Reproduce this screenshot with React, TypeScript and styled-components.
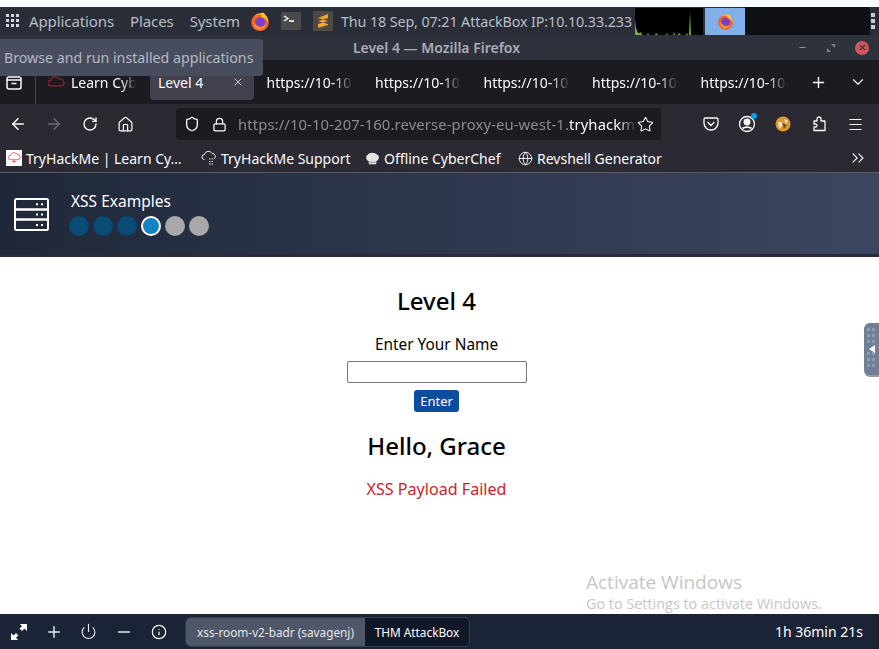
import { FC, ReactNode } from 'react';
import styled, { createGlobalStyle } from 'styled-components';
import {
  ArrowLeft,
  ArrowRight,
  ChevronDown,
  ChevronsRight,
  Globe,
  Home,
  Info,
  Lock,
  Menu,
  Minus,
  Plus,
  Power,
  RotateCw,
  Shield,
  Star,
  X,
} from 'lucide-react';

const GlobalStyle = createGlobalStyle`
  html, body { margin: 0; padding: 0; background: #fff; }
  body { font-family: "Noto Sans", "Open Sans", sans-serif; overflow: hidden; }
  #root { width: 879px; height: 649px; }
`;

const Screen = styled.div`
  position: relative;
  width: 879px;
  height: 649px;
  display: flex;
  flex-direction: column;
  overflow: hidden;
  background: #fff;
`;

const TopStrip = styled.div`
  height: 7px;
  flex: none;
  background: #f8fbfd;
`;

const Panel = styled.div`
  height: 28px;
  flex: none;
  display: flex;
  align-items: center;
  background: #292d38;
  color: #b9bdc6;
  font-size: 15px;
  letter-spacing: -0.1px;
`;

const AppGrid = styled.svg`
  width: 14px;
  height: 14px;
  margin-left: 6px;
  margin-right: 9px;
  flex: none;
`;

const PanelLabel = styled.span<{ $gap: number }>`
  margin-right: ${(p) => p.$gap}px;
  white-space: nowrap;
`;

const Clock = styled.span`
  width: 292px;
  flex: none;
  font-size: 14.3px;
  white-space: nowrap;
`;

const Launcher = styled.div<{ $gap: number }>`
  width: 20px;
  height: 20px;
  flex: none;
  margin-right: ${(p) => p.$gap}px;
  display: flex;
  align-items: center;
  justify-content: center;
`;

const Graph = styled.svg`
  width: 68px;
  height: 27px;
  flex: none;
  margin-left: 2px;
  background: #000;
`;

const TaskButton = styled.div`
  width: 40px;
  height: 27px;
  flex: none;
  margin-left: 2px;
  display: flex;
  align-items: center;
  justify-content: center;
  background: #7fb0ea;
`;

const TaskEmpty = styled.div`
  width: 125px;
  height: 28px;
  flex: none;
  background: #0f1016;
`;

const PanelDots = styled.div`
  margin-left: 1px;
  display: flex;
  flex-direction: column;
  gap: 2px;
`;

const PanelDot = styled.i`
  width: 4px;
  height: 4px;
  background: #c8ccd4;
`;

const TitleBar = styled.div`
  position: relative;
  height: 25px;
  flex: none;
  padding-right: 6px;
  display: flex;
  align-items: center;
  justify-content: center;
  background: #2e323d;
  color: #a9adb6;
  font-size: 14px;
  font-weight: 600;
`;

const WindowButtons = styled.div`
  position: absolute;
  top: 0;
  right: 10px;
  height: 25px;
  display: flex;
  align-items: center;
  gap: 19px;
`;

const CloseDot = styled.div`
  width: 14px;
  height: 14px;
  border-radius: 50%;
  background: #d0555f;
  display: flex;
  align-items: center;
  justify-content: center;
`;

const TabBar = styled.div`
  height: 44px;
  flex: none;
  display: flex;
  align-items: flex-start;
  background: #1c1b22;
  color: #fbfbfe;
  font-size: 14px;
`;

const ListButton = styled.div`
  width: 36px;
  height: 44px;
  flex: none;
  padding: 2px 8px 0 0;
  display: flex;
  align-items: center;
  justify-content: center;
  border-right: 1px solid #45454d;
  box-sizing: border-box;
`;

const Tab = styled.div<{ $active?: boolean; $width: number; $left: number }>`
  width: ${(p) => p.$width}px;
  height: 40px;
  flex: none;
  padding: 4px 10px 0 ${(p) => p.$left}px;
  margin-right: 4.5px;
  box-sizing: border-box;
  display: flex;
  align-items: center;
  border-radius: 0 0 4px 4px;
  background: ${(p) => (p.$active ? '#42414d' : 'transparent')};
`;

const TabText = styled.span<{ $fade?: boolean }>`
  flex: 1;
  min-width: 0;
  white-space: nowrap;
  ${(p) => p.$fade && 'mask-image: linear-gradient(to right, #000 78%, transparent 100%);'}
`;

const TabActions = styled.div`
  flex: 1;
  display: flex;
  align-items: center;
  height: 44px;
  justify-content: space-between;
  padding: 0 12px 0 9px;
`;

const NavBar = styled.div`
  height: 40px;
  flex: none;
  display: flex;
  align-items: center;
  background: #2b2a33;
  color: #fbfbfe;
`;

const IconSlot = styled.div<{ $width: number }>`
  width: ${(p) => p.$width}px;
  flex: none;
  position: relative;
  display: flex;
  align-items: center;
  justify-content: center;
`;

const UrlBar = styled.div`
  width: 485px;
  height: 32px;
  flex: none;
  margin: 0 32px 0 33px;
  padding: 0 7px 0 8px;
  box-sizing: border-box;
  display: flex;
  align-items: center;
  border-radius: 4px;
  background: #1c1b22;
`;

const UrlText = styled.div`
  flex: 1;
  min-width: 0;
  white-space: nowrap;
  font-size: 14.8px;
  letter-spacing: 0.12px;
  color: #8c8b92;
  mask-image: linear-gradient(to right, #000 95%, transparent 100%);
`;

const UrlHost = styled.span`
  color: #fbfbfe;
`;

const Badge = styled.i`
  position: absolute;
  top: -2px;
  right: 8px;
  width: 6px;
  height: 6px;
  border-radius: 50%;
  background: #0a9dea;
`;

const BookmarkBar = styled.div`
  height: 29px;
  flex: none;
  display: flex;
  align-items: center;
  box-sizing: border-box;
  border-bottom: 1px solid #5b5b66;
  padding-left: 6px;
  background: #2b2a33;
  color: #fbfbfe;
  font-size: 14px;
`;

const Bookmark = styled.div<{ $gap: number; $width: number }>`
  width: ${(p) => p.$width}px;
  flex: none;
  margin-right: ${(p) => p.$gap}px;
  display: flex;
  align-items: center;
  gap: 4px;
  white-space: nowrap;
`;

const Favicon = styled.div`
  width: 16px;
  height: 16px;
  flex: none;
  background: #fff;
  display: flex;
  align-items: center;
  justify-content: center;
`;

const Overflow = styled.div`
  margin-left: auto;
  margin-right: 11px;
  display: flex;
`;

const RoomHeader = styled.header`
  height: 84px;
  flex: none;
  box-sizing: border-box;
  display: flex;
  align-items: center;
  padding: 2px 0 0 14px;
  border-bottom: 3px solid #262c3b;
  background: linear-gradient(90deg, #1f2738 0%, #2c344a 40%, #3d4660 100%);
`;

const RoomInfo = styled.div`
  margin-left: 20px;
  padding-bottom: 3px;
  display: flex;
  flex-direction: column;
  gap: 4px;
`;

const RoomTitle = styled.div`
  margin-left: 2px;
  color: #fff;
  font-size: 15.5px;
  line-height: 21px;
`;

const Dots = styled.div`
  display: flex;
  gap: 4px;
`;

const Dot = styled.i<{ $state: 'done' | 'active' | 'todo' }>`
  width: 20px;
  height: 20px;
  box-sizing: border-box;
  border-radius: 50%;
  background: ${(p) => (p.$state === 'done' ? '#084b74' : p.$state === 'active' ? '#1582c4' : '#a8a8aa')};
  border: ${(p) => (p.$state === 'active' ? '2px solid #fff' : 'none')};
`;

const Main = styled.main`
  flex: 1;
  min-height: 0;
  display: flex;
  flex-direction: column;
  align-items: center;
  padding: 29px 6px 0 0;
  background: #fff;
  color: #000;
`;

const Heading = styled.h2`
  margin: 0;
  font-size: 24px;
  font-weight: 500;
  line-height: 30px;
`;

const NameLabel = styled.label`
  margin-top: 18px;
  font-size: 15.4px;
  line-height: 22px;
`;

const NameInput = styled.input`
  width: 180px;
  height: 22px;
  margin-top: 5px;
  padding: 0;
  box-sizing: border-box;
  border: 1px solid #767676;
  border-radius: 2px;
  background: #fff;
`;

const EnterButton = styled.button`
  width: 45px;
  height: 22px;
  margin-top: 7px;
  padding: 0;
  border: none;
  border-radius: 3px;
  background: #0d4d9e;
  color: #fff;
  font-family: inherit;
  font-size: 13px;
`;

const Greeting = styled.h2`
  margin: 18px 0 0;
  font-size: 24px;
  font-weight: 500;
  line-height: 32px;
`;

const ResultText = styled.p`
  margin: 16px 0 0;
  color: #cc2229;
  font-size: 16.1px;
  line-height: 22px;
`;

const SideHandle = styled.div`
  position: absolute;
  top: 323px;
  left: 864px;
  width: 15px;
  height: 52px;
  border-radius: 6px 0 0 6px;
  background: #6f7f96;
  box-shadow: 0 2px 0 #9a9a9a;
  display: flex;
  align-items: center;
  justify-content: center;
`;

const Watermark = styled.div`
  position: absolute;
  top: 570px;
  left: 586px;
  color: #c6c6c6;
  font-family: "Open Sans", sans-serif;
  white-space: nowrap;
`;

const WatermarkTitle = styled.div`
  font-size: 19px;
  line-height: 25px;
`;

const WatermarkText = styled.div`
  font-size: 14.4px;
  line-height: 18px;
`;

const BottomBar = styled.footer`
  height: 35px;
  flex: none;
  display: flex;
  align-items: center;
  padding-right: 16px;
  background: #1b2336;
  color: #fff;
  font-size: 13px;
  position: relative;
`;

const ControlButton = styled.div`
  width: 35px;
  flex: none;
  display: flex;
  align-items: center;
  justify-content: center;
`;

const Controls = styled.div`
  display: flex;
  width: 176px;
  padding-left: 1px;
  flex: none;
`;

const SessionGroup = styled.div`
  display: flex;
  height: 30px;
  flex: none;
  margin-left: 8px;
  box-sizing: border-box;
  border: 1px solid #363f55;
  border-radius: 6px;
  overflow: hidden;
  font-size: 11.8px;
`;

const SessionTab = styled.div<{ $active?: boolean; $width: number }>`
  width: ${(p) => p.$width}px;
  display: flex;
  align-items: center;
  justify-content: center;
  background: ${(p) => (p.$active ? '#4f5768' : '#101727')};
  color: ${(p) => (p.$active ? '#e4e7ec' : '#fff')};
`;

const Timer = styled.div`
  margin-left: auto;
  font-size: 14px;
`;

const Tooltip = styled.div`
  position: absolute;
  top: 39px;
  left: 0;
  width: 263px;
  height: 37px;
  box-sizing: border-box;
  padding-left: 4px;
  display: flex;
  align-items: center;
  border-radius: 0 3px 3px 0;
  background: #484d5e;
  color: #b4b8c2;
  font-size: 14.2px;
  white-space: nowrap;
`;

const FirefoxLogo: FC<{ size: number }> = ({ size }) => (
  <svg width={size} height={size} viewBox="0 0 24 24">
    <circle cx="12" cy="13" r="10.5" fill="#f2622e" />
    <path d="M3 8C6 3 12 1 17 2c-1 2-1 3 0 4 3 1 5 4 5 7 0-5-4-9-10-9C8 4 5 5 3 8z" fill="#ffb11f" />
    <path d="M15 1c3 2 7 6 7 12-2-4-5-6-8-6 0-2 0-4 1-6z" fill="#ffc933" />
    <circle cx="12" cy="13" r="6.2" fill="#7b3fc4" />
    <path d="M5 11c1 5 5 8 10 7 2-.5 3-1.500 4-3-1 6-7 8-11 6-3-2-4-6-3-10z" fill="#ff8a2a" />
  </svg>
);

const TerminalLogo = () => (
  <svg width="20" height="20" viewBox="0 0 20 20">
    <rect width="20" height="18" y="1" rx="1" fill="#4a4a4a" />
    <path d="M3 5l4 2.500-4 2.500" fill="none" stroke="#fff" strokeWidth="1.400" />
    <path d="M8 10h5" stroke="#fff" strokeWidth="1.600" />
  </svg>
);

const SublimeLogo = () => (
  <svg width="20" height="20" viewBox="0 0 20 20">
    <rect width="20" height="20" fill="#4d4a45" />
    <path d="M15 3v4L5 10V7z M5 10l10 3v-3L5 7z M15 10v4L5 17v-4z" fill="#f2a22e" />
  </svg>
);

const GraphDrawing = () => (
  <Graph viewBox="0 0 68 27">
    <path
      d="M0 27V11l1 9 2 5h2l1-1 1 3h5l1-2 1 2h6l1-2 2 2h8l1-2 1 2h5l1-3 1 3h3l1-2 2 2h5l1-2 1 2h1l1-24 1 24z"
      fill="#6fb52c"
    />
  </Graph>
);

const CloudFavicon = () => (
  <svg width="14" height="14" viewBox="0 0 16 16" fill="none" stroke="#d8656c" strokeWidth="1.100">
    <path d="M4 10a2.500 2.500 0 0 1 0-5 4 4 0 0 1 7.500-1 3 3 0 0 1 1 6z" />
    <path d="M8 10v4M6 12h4" />
  </svg>
);

const SupportCloud = () => (
  <svg width="16" height="16" viewBox="0 0 16 16" fill="none" stroke="#e6e6ea" strokeWidth="1">
    <path d="M3.500 9.500a2.500 2.500 0 0 1 0-5 4 4 0 0 1 7.500-1 3 3 0 0 1 2 5.500" />
    <path d="M8 9h5M8 11.500h5M8 14h5" strokeDasharray="1.500 1" />
  </svg>
);

const ChefHat = () => (
  <svg width="15" height="15" viewBox="0 0 16 16">
    <path d="M4 11C1 10 0 5 3 4c1-3 8-3 10 0 3 1 2 6-1 7v3H4z" fill="#e4e4e4" />
    <path d="M4 12h8" stroke="#8b8b8b" />
  </svg>
);

const PocketIcon = () => (
  <svg width="16" height="16" viewBox="0 0 16 16" fill="none" stroke="#fbfbfe" strokeWidth="1.300">
    <path d="M2.500 2h11A1.500 1.500 0 0 1 15 3.500V7A7 7 0 0 1 1 7V3.500A1.500 1.500 0 0 1 2.500 2z" />
    <path d="M5 6.500l3 3 3-3" strokeLinecap="round" />
  </svg>
);

const AccountIcon = () => (
  <svg width="18" height="18" viewBox="0 0 18 18" fill="none" stroke="#fbfbfe" strokeWidth="1.300">
    <circle cx="9" cy="9" r="7.500" />
    <circle cx="9" cy="7" r="2.800" fill="#fbfbfe" />
    <path d="M4.500 13.500c2-1.800 7-1.800 9 0" strokeWidth="1.800" />
  </svg>
);

const AvatarIcon = () => (
  <svg width="16" height="16" viewBox="0 0 16 16">
    <circle cx="8" cy="8" r="7.500" fill="#d99a35" />
    <path d="M3 6h4l1 4-4 2zM9 3l4 2-2 3z" fill="#f5e7c8" />
    <path d="M7 7l5 2-3 4z" fill="#7c4a1c" />
  </svg>
);

const ExtensionIcon = () => (
  <svg width="16" height="16" viewBox="0 0 16 16" fill="none" stroke="#fbfbfe" strokeWidth="1.300" strokeLinejoin="round">
    <path d="M6 5V3a2 2 0 0 1 4 0v2h4v9.500H3v-3.500h1.500a1.500 1.500 0 0 0 0-3H3V5z" />
  </svg>
);

const ServerIcon = () => (
  <svg width="35" height="33" viewBox="0 0 35 33" fill="none" stroke="#fff" strokeWidth="2">
    <rect x="1" y="1" width="33" height="10.500" rx="1.500" />
    <rect x="1" y="11.500" width="33" height="10" />
    <rect x="1" y="21.500" width="33" height="10.500" rx="1.500" />
    <path d="M22 6.200h2M27 6.200h2M22 16.500h2M27 16.500h2M22 27h2M27 27h2" />
  </svg>
);

const ExpandIcon = () => (
  <svg width="18" height="18" viewBox="0 0 18 18" fill="#fff">
    <path d="M10 1h7v7l-2.500-2.500-2.500 2.500-2.500-2.500L12 3.500z" />
    <path d="M8 17H1v-7l2.500 2.500L6 10l2.500 2.500L6 14.500z" />
  </svg>
);

const RestoreIcon = () => (
  <svg width="10" height="10" viewBox="0 0 10 10" fill="#7f838d">
    <path d="M5 1h4v4zM1 5v4h4z" />
  </svg>
);

const GripIcon = () => (
  <svg width="9" height="42" viewBox="0 0 9 42" fill="#8d9bb0">
    <path d="M0 0h3v3H0zM5 0h3v3H5zM0 6h3v3H0zM5 6h3v3H5zM0 12h3v3H0zM5 12h3v3H5zM0 30h3v3H0zM5 30h3v3H5zM0 36h3v3H0zM5 36h3v3H5zM0 24h3v3H0zM5 24h3v3H5z" />
    <path d="M2 21l6-4v8z" fill="#fff" />
  </svg>
);

const LabeledTab: FC<{ icon?: ReactNode; label: string; width: number }> = ({ icon, label, width }) => (
  <Tab $width={width} $left={8}>
    {icon}
    <TabText $fade>{label}</TabText>
  </Tab>
);

const steps: Array<'done' | 'active' | 'todo'> = ['done', 'done', 'done', 'active', 'todo', 'todo'];

const App: FC = () => {
  return (
    <Screen>
      <GlobalStyle />
      <TopStrip />
      <Panel>
        <AppGrid viewBox="0 0 14 14" fill="#d4d7dd">
          <path d="M0 0h3v3H0zM5 0h3v3H5zM10 0h3v3h-3zM0 5h3v3H0zM5 5h3v3H5zM10 5h3v3h-3zM0 10h3v3H0zM5 10h3v3H5zM10 10h3v3h-3z" />
        </AppGrid>
        <PanelLabel $gap={16}>Applications</PanelLabel>
        <PanelLabel $gap={16}>Places</PanelLabel>
        <PanelLabel $gap={10}>System</PanelLabel>
        <Launcher $gap={11}>
          <FirefoxLogo size={21} />
        </Launcher>
        <Launcher $gap={12}>
          <TerminalLogo />
        </Launcher>
        <Launcher $gap={8}>
          <SublimeLogo />
        </Launcher>
        <Clock>Thu 18 Sep, 07:21 AttackBox IP:10.10.33.233</Clock>
        <GraphDrawing />
        <TaskButton>
          <FirefoxLogo size={17} />
        </TaskButton>
        <TaskEmpty />
        <PanelDots>
          <PanelDot />
          <PanelDot />
          <PanelDot />
        </PanelDots>
      </Panel>
      <TitleBar>
        Level 4 — Mozilla Firefox
        <WindowButtons>
          <Minus size={9} color="#8f939c" strokeWidth={3} />
          <RestoreIcon />
          <CloseDot>
            <X size={9} color="#4a2a30" strokeWidth={3} />
          </CloseDot>
        </WindowButtons>
      </TitleBar>
      <TabBar>
        <ListButton>
          <svg width="16" height="14" viewBox="0 0 16 14" fill="none" stroke="#fbfbfe" strokeWidth="1.500">
            <rect x="1" y="1" width="14" height="12" rx="2" />
            <path d="M1 4h14M5.500 7.500h5" />
          </svg>
        </ListButton>
        <Tab $width={109.5} $left={12}>
          <svg width="23" height="16" viewBox="0 -2 24 16" fill="none" stroke="#8c2530" strokeWidth="1.200" style={{ flex: 'none' }}>
            <path d="M3 10a3 3 0 0 1 0-6 5 5 0 0 1 9-1 3.500 3.500 0 0 1 2 7z" />
          </svg>
          <TabText $fade>Learn Cyb</TabText>
        </Tab>
        <Tab $active $width={104} $left={8}>
          <TabText>Level 4</TabText>
          <X size={12} color="#fbfbfe" strokeWidth={1.500} />
        </Tab>
        <LabeledTab label="https://10-10" width={104} />
        <LabeledTab label="https://10-10" width={104} />
        <LabeledTab label="https://10-10" width={104} />
        <LabeledTab label="https://10-10" width={104} />
        <LabeledTab label="https://10-10" width={104} />
        <TabActions>
          <Plus size={17} color="#fbfbfe" />
          <ChevronDown size={18} color="#fbfbfe" strokeWidth={1.500} />
        </TabActions>
      </TabBar>
      <NavBar>
        <IconSlot $width={36}>
          <ArrowLeft size={18} />
        </IconSlot>
        <IconSlot $width={36}>
          <ArrowRight size={18} color="#6a6a72" />
        </IconSlot>
        <IconSlot $width={36}>
          <RotateCw size={16} />
        </IconSlot>
        <IconSlot $width={35}>
          <Home size={17} strokeWidth={1.700} />
        </IconSlot>
        <UrlBar>
          <Shield size={16} />
          <IconSlot $width={38}>
            <Lock size={15} />
          </IconSlot>
          <UrlText>
            https://10-10-207-160.reverse-proxy-eu-west-1.<UrlHost>tryhackm</UrlHost>
          </UrlText>
          <Star size={17} strokeWidth={1.500} />
        </UrlBar>
        <IconSlot $width={36}>
          <PocketIcon />
        </IconSlot>
        <IconSlot $width={36}>
          <AccountIcon />
          <Badge />
        </IconSlot>
        <IconSlot $width={36}>
          <AvatarIcon />
        </IconSlot>
        <IconSlot $width={36}>
          <ExtensionIcon />
        </IconSlot>
        <IconSlot $width={36}>
          <Menu size={17} strokeWidth={1.500} />
        </IconSlot>
      </NavBar>
      <BookmarkBar>
        <Bookmark $width={176} $gap={19}>
          <Favicon>
            <CloudFavicon />
          </Favicon>
          TryHackMe | Learn Cy…
        </Bookmark>
        <Bookmark $width={151} $gap={13}>
          <SupportCloud />
          TryHackMe Support
        </Bookmark>
        <Bookmark $width={140} $gap={13}>
          <ChefHat />
          Offline CyberChef
        </Bookmark>
        <Bookmark $width={147} $gap={0}>
          <Globe size={15} strokeWidth={1.400} />
          Revshell Generator
        </Bookmark>
        <Overflow>
          <ChevronsRight size={20} strokeWidth={1.300} />
        </Overflow>
      </BookmarkBar>
      <RoomHeader>
        <ServerIcon />
        <RoomInfo>
          <RoomTitle>XSS Examples</RoomTitle>
          <Dots>
            {steps.map((state, i) => (
              <Dot key={i} $state={state} />
            ))}
          </Dots>
        </RoomInfo>
      </RoomHeader>
      <Main>
        <Heading>Level 4</Heading>
        <NameLabel>Enter Your Name</NameLabel>
        <NameInput />
        <EnterButton>Enter</EnterButton>
        <Greeting>Hello, Grace</Greeting>
        <ResultText>XSS Payload Failed</ResultText>
      </Main>
      <BottomBar>
        <Controls>
          <ControlButton>
            <ExpandIcon />
          </ControlButton>
          <ControlButton>
            <Plus size={18} color="#e6e8ee" />
          </ControlButton>
          <ControlButton>
            <Power size={17} color="#e6e8ee" strokeWidth={1.600} />
          </ControlButton>
          <ControlButton>
            <Minus size={18} color="#e6e8ee" />
          </ControlButton>
          <ControlButton>
            <Info size={16} color="#fff" strokeWidth={1.800} />
          </ControlButton>
        </Controls>
        <SessionGroup>
          <SessionTab $active $width={179}>
            xss-room-v2-badr (savagenj)
          </SessionTab>
          <SessionTab $width={104}>THM AttackBox</SessionTab>
        </SessionGroup>
        <Timer>1h 36min 21s</Timer>
      </BottomBar>
      <SideHandle>
        <GripIcon />
      </SideHandle>
      <Watermark>
        <WatermarkTitle>Activate Windows</WatermarkTitle>
        <WatermarkText>Go to Settings to activate Windows.</WatermarkText>
      </Watermark>
      <Tooltip>Browse and run installed applications</Tooltip>
    </Screen>
  );
};

export default App;
